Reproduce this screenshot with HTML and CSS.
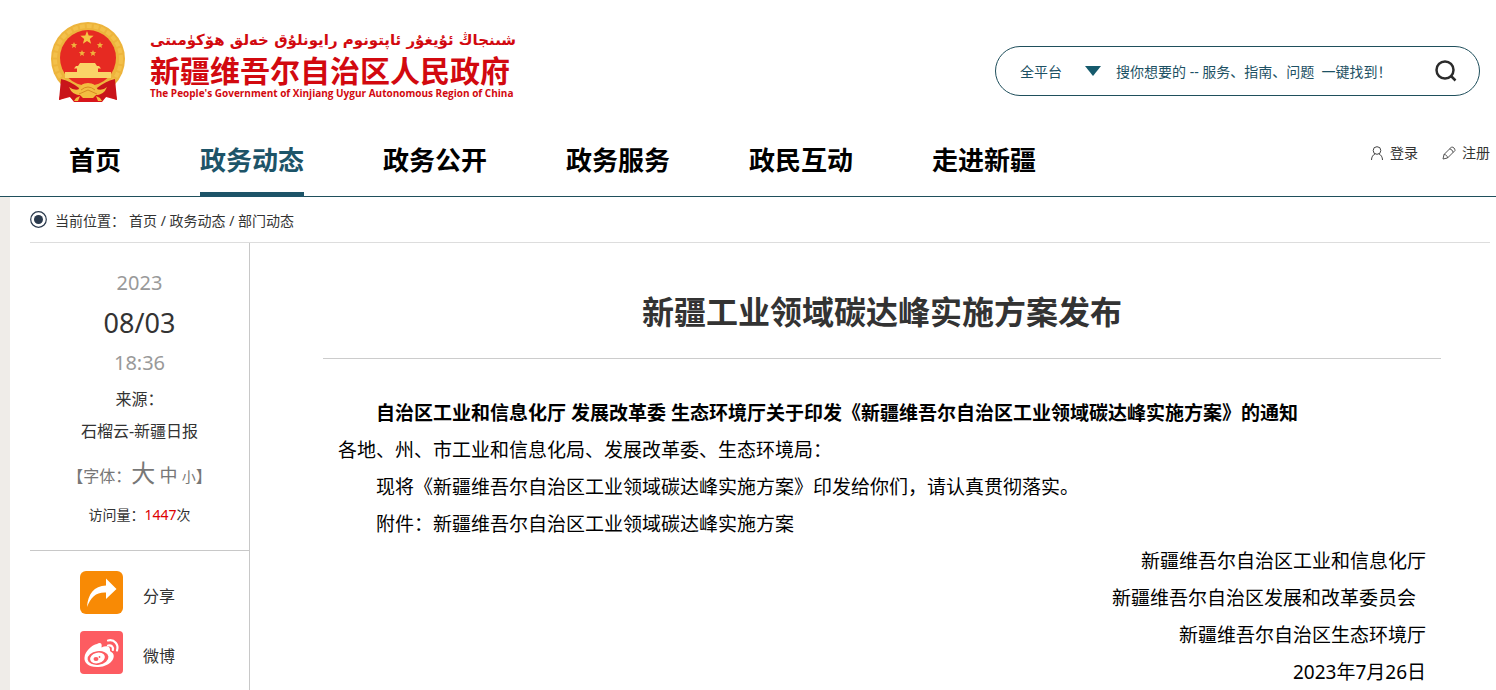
FILE: index.html
```html
<!DOCTYPE html>
<html lang="zh-CN">
<head>
  <meta charset="UTF-8">
  <meta name="viewport" content="width=device-width, initial-scale=1.0">
  <title>新疆工业领域碳达峰实施方案发布</title>
  <link rel="stylesheet" href="styles.css">
</head>
<body>
  <header class="header">
    <div class="header-top">
      <a class="logo" href="#">
        <svg class="emblem" viewBox="0 0 76 81" aria-hidden="true">
          <path d="M13 61 L9 79 L20 76 L24 81 H52 L56 76 L67 79 L63 61 Z" fill="#d8151b"/>
          <circle cx="38" cy="38" r="37" fill="#edb43c"/>
          <circle cx="38" cy="38" r="33" fill="none" stroke="#f3c04a" stroke-width="4" stroke-dasharray="5 2"/>
          <circle cx="38" cy="37" r="28" fill="#e62a22"/>
          <path d="M37 10l1.7 4.6 4.9.2-3.8 3.1 1.3 4.8-4.1-2.8-4.1 2.8 1.3-4.8-3.8-3.1 4.9-.2z" fill="#f6c544"/>
          <g fill="#f0b23c">
            <path d="M24 21l.9 2.1 2.3.2-1.8 1.5.6 2.2-2-1.2-2 1.2.6-2.2-1.8-1.5 2.3-.2z"/>
            <path d="M50 21l.9 2.1 2.3.2-1.8 1.5.6 2.2-2-1.2-2 1.2.6-2.2-1.8-1.5 2.3-.2z"/>
            <path d="M32 29l.9 2.1 2.3.2-1.8 1.5.6 2.2-2-1.2-2 1.2.6-2.2-1.8-1.5 2.3-.2z"/>
            <path d="M43 29l.9 2.1 2.3.2-1.8 1.5.6 2.2-2-1.2-2 1.2.6-2.2-1.8-1.5 2.3-.2z"/>
          </g>
          <path d="M30 42h15l2 3h-19zM26 45h23l2 2.500h-27zM27 47.500h21v3.500h-21zM15 51h46v6h-46z" fill="#fad467"/>
          <path d="M11 58 Q20 60 29 67 L25 80 L19 75 L9 79 Z" fill="#c9141a"/>
          <path d="M65 58 Q56 60 47 67 L51 80 L57 75 L67 79 Z" fill="#c9141a"/>
          <path d="M30 68 Q30 62 38 62 Q46 62 46 68 Q53 70 57 66 Q54 74 46 74 L43 77 H33 L30 74 Q22 74 19 66 Q24 70 30 68 Z" fill="#f3bd40"/>
          <path d="M31 69 Q38 63 45 69 M29 73 L38 69 L47 73" fill="none" stroke="#d88b22"/>
          <path d="M26 77 L30 75 L28 80 H24 Z M50 77 L46 75 L48 80 H52 Z" fill="#f3bd40"/>
        </svg>
        <span class="logo-text">
          <span class="logo-ug" lang="ug" dir="rtl">شىنجاڭ ئۇيغۇر ئاپتونوم رايونلۇق خەلق ھۆكۈمىتى</span>
          <span class="logo-zh">新疆维吾尔自治区人民政府</span>
          <span class="logo-en" lang="en">The People's Government of Xinjiang Uygur Autonomous Region of China</span>
        </span>
      </a>
      <form class="search">
        <label class="platform">
          <select class="platform-select" aria-label="平台">
            <option>全平台</option>
          </select>
          <svg class="arrow" viewBox="0 0 16 10" aria-hidden="true"><path d="M0 0h16L8 10z" fill="#155a6c"/></svg>
        </label>
        <input class="search-input" type="text" aria-label="搜索" placeholder="搜你想要的 -- 服务、指南、问题 &nbsp;一键找到！">
        <button class="search-btn" type="button" aria-label="搜索">
          <svg viewBox="0 0 22 22" aria-hidden="true">
            <circle cx="10" cy="10" r="8.500" fill="none" stroke="#2b2b2b" stroke-width="2.500"/>
            <path d="M15.500 15.500L20.500 20.500" stroke="#2b2b2b" stroke-width="2.500"/>
          </svg>
        </button>
      </form>
    </div>

    <div class="header-nav">
      <nav class="nav">
        <a href="#">首页</a>
        <a class="active" href="#">政务动态</a>
        <a href="#">政务公开</a>
        <a href="#">政务服务</a>
        <a href="#">政民互动</a>
        <a href="#">走进新疆</a>
      </nav>
      <div class="user">
        <a href="#">
          <svg viewBox="0 0 14 14" fill="none" stroke="#444" aria-hidden="true"><circle cx="7" cy="4.500" r="3.800"/><path d="M1.500 14c0-3 1.500-5.200 3.700-6.200M12.500 14c0-3-1.500-5.200-3.700-6.200"/></svg>
          登录
        </a>
        <a href="#">
          <svg viewBox="0 0 14 14" fill="none" stroke="#555" aria-hidden="true"><path d="M1 13l1-4.500L9.500 1c2 0 3.500 1.500 3.500 3.500L5.500 12zM2 8.500c2 0 3.500 1.500 3.500 3.500M7.500 3c2 .2 3.300 1.500 3.500 3.500"/></svg>
          注册
        </a>
      </div>
    </div>
  </header>

  <main class="wrapper">
    <div class="breadcrumb">
      <svg viewBox="0 0 17 17" aria-hidden="true"><circle cx="8.500" cy="8.500" r="7.800" fill="none" stroke="#2b3a4d" stroke-width="1.200"/><circle cx="8.500" cy="8.500" r="4.500" fill="#2b3a4d"/></svg>
      <span>当前位置：</span>
      <span><a href="#">首页</a> / <a href="#">政务动态</a> / <a href="#">部门动态</a></span>
    </div>

    <div class="content">
      <aside class="sidebar">
        <div class="info">
          <p class="time">2023</p>
          <p class="date">08/03</p>
          <p class="time">18:36</p>
          <p>来源：</p>
          <p>石榴云-新疆日报</p>
          <p class="font-size">【字体：<button type="button" class="big">大</button> <button type="button" class="mid">中</button> <button type="button" class="small">小</button>】</p>
          <p class="visits">访问量：<span>1447</span>次</p>
        </div>
        <div class="share">
          <a href="#">
            <svg viewBox="0 0 43 43" aria-hidden="true">
              <rect width="43" height="43" rx="6" fill="#f88a05"/>
              <path d="M7 36C8 23 14 15 26 14.500V7.500L36.500 18 26 28V21.500C16 21 11 26 7 36z" fill="#fff"/>
            </svg>
            <span>分享</span>
          </a>
          <a href="#">
            <svg viewBox="0 0 43 43" aria-hidden="true">
              <rect width="43" height="43" rx="4" fill="#fd5c61"/>
              <path d="M17 13c3-2 5.500-1 4.500 3.500 4-2 9-2 8.500 3 0 1 1 1.300 2 2 5 4-1 14-13.500 14.500C8 36.500 4 31.500 4.500 26.500 5 20 12 14 17 13z" fill="#fff"/>
              <ellipse cx="18" cy="27" rx="10.500" ry="6.800" fill="#fd5c61" transform="rotate(-8 18 27)"/>
              <ellipse cx="17.500" cy="27" rx="7.500" ry="5.300" fill="#fff" transform="rotate(-15 17.500 27)"/>
              <ellipse cx="16" cy="28" rx="2.500" ry="2" fill="#fd5c61"/>
              <circle cx="19.500" cy="26" r=".9" fill="#fd5c61"/>
              <path d="M28 9.500c6.500-1.500 11 4 9 10M28 14.500c3.500-.8 5.500 1.500 4.800 4.500" fill="none" stroke="#fff" stroke-width="2.200" stroke-linecap="round"/>
            </svg>
            <span>微博</span>
          </a>
        </div>
      </aside>

      <article class="article">
        <h1>新疆工业领域碳达峰实施方案发布</h1>
        <div class="text">
          <p class="indent"><strong>自治区工业和信息化厅 发展改革委 生态环境厅关于印发《新疆维吾尔自治区工业领域碳达峰实施方案》的通知</strong></p>
          <p>各地、州、市工业和信息化局、发展改革委、生态环境局：</p>
          <p class="indent">现将《新疆维吾尔自治区工业领域碳达峰实施方案》印发给你们，请认真贯彻落实。</p>
          <p class="indent">附件：新疆维吾尔自治区工业领域碳达峰实施方案</p>
          <p class="sign">新疆维吾尔自治区工业和信息化厅</p>
          <p class="sign">新疆维吾尔自治区发展和改革委员会&nbsp;&nbsp;</p>
          <p class="sign">新疆维吾尔自治区生态环境厅</p>
          <p class="sign">2023年7月26日</p>
        </div>
      </article>
    </div>
  </main>
</body>
</html>
```

FILE: styles.css
```css
* {
  box-sizing: border-box;
  margin: 0;
  padding: 0;
}
body {
  font-family: "Noto Sans", "Noto Sans CJK SC", sans-serif;
  font-size: 14px;
  color: #333;
  background: #efece8;
}
a {
  color: inherit;
  text-decoration: none;
}
button, input, select {
  font: inherit;
  color: inherit;
  background: none;
  border: none;
  outline: none;
}

/* header */
.header {
  background: #fff;
  border-bottom: 1px solid #1f4f5c;
}
.header-top {
  display: flex;
  justify-content: space-between;
  padding: 21px 16px 0 50px;
}
.logo {
  display: flex;
  gap: 24px;
  color: #d2090f;
}
.emblem {
  width: 76px;
  height: 81px;
}
.logo-text {
  display: flex;
  flex-direction: column;
  font-weight: bold;
  white-space: nowrap;
  padding-top: 6px;
}
.logo-ug {
  font-family: "DejaVu Sans", sans-serif;
  font-size: 15px;
  line-height: 26px;
  text-align: left;
}
.logo-zh {
  font-family: "Noto Sans CJK SC", sans-serif;
  font-size: 30px;
  line-height: 33px;
}
.logo-en {
  font-family: "Open Sans", sans-serif;
  font-size: 10px;
  line-height: 14px;
}
.search {
  display: flex;
  align-items: center;
  width: 485px;
  height: 50px;
  margin-top: 25px;
  padding: 0 22px 0 24px;
  border: 1px solid #1f4f5c;
  border-radius: 25px;
  color: #1d5164;
}
.platform {
  display: flex;
  align-items: center;
  width: 96px;
}
.platform-select {
  appearance: none;
  width: 65px;
}
.arrow {
  width: 16px;
  height: 10px;
}
.search-input {
  flex: 1;
}
.search-input::placeholder {
  color: #1d5164;
  opacity: 1;
}
.search-btn {
  width: 22px;
  height: 22px;
  cursor: pointer;
}

/* nav */
.header-nav {
  display: flex;
  justify-content: space-between;
  padding: 38px 6px 0 69px;
}
.nav {
  display: flex;
  gap: 79px;
  margin-bottom: -1px;
  font-size: 26px;
  font-weight: bold;
  line-height: 40px;
  color: #000;
}
.nav a {
  padding-bottom: 12px;
  border-bottom: 5px solid transparent;
}
.nav .active {
  color: #1d5468;
  border-bottom-color: #1d5468;
}
.user {
  display: flex;
  gap: 24px;
  line-height: 26px;
}
.user a {
  display: flex;
  align-items: center;
  align-self: flex-start;
  gap: 6px;
}
.user svg {
  width: 14px;
  height: 14px;
}

/* page */
.wrapper {
  margin-left: 10px;
  padding: 0 6px 0 20px;
  background: #fff;
}
.breadcrumb {
  display: flex;
  align-items: center;
  height: 46px;
  border-bottom: 1px solid #ddd;
}
.breadcrumb svg {
  width: 17px;
  height: 17px;
  margin-right: 8px;
}
.breadcrumb span {
  margin-right: 4px;
}
.content {
  display: flex;
}
.sidebar {
  width: 220px;
  border-right: 1px solid #c8c8c8;
}
.info {
  padding: 20px 0 19px;
  border-bottom: 1px solid #c8c8c8;
  text-align: center;
  font-size: 16px;
  line-height: 32px;
}
.info .time {
  font-size: 20px;
  line-height: 40px;
  color: #999;
}
.info .date {
  font-size: 27px;
  line-height: 40px;
}
.font-size {
  height: 40px;
  margin: 6px 0;
  line-height: 40px;
  color: #777;
}
.font-size button {
  cursor: pointer;
}
.info .big {
  font-size: 24px;
}
.info .mid {
  font-size: 18px;
}
.info .small {
  font-size: 14px;
}
.visits {
  font-size: 14px;
}
.visits span {
  color: #d00;
}
.share {
  display: flex;
  flex-direction: column;
  gap: 17px;
  padding: 20px 0 20px 50px;
}
.share a {
  display: flex;
  align-items: flex-end;
  gap: 20px;
  font-size: 16px;
  line-height: 36px;
}
.share svg {
  width: 43px;
  height: 43px;
}

/* article */
.article {
  flex: 1;
  padding: 45px 49px 20px 73px;
}
.article h1 {
  padding-bottom: 22px;
  border-bottom: 1px solid #ccc;
  text-align: center;
  font-size: 32px;
  line-height: 48px;
}
.text {
  padding: 36px 15px 0;
  font-size: 19px;
  line-height: 37px;
  color: #000;
}
.indent {
  text-indent: 2em;
}
.sign {
  text-align: right;
}
```
